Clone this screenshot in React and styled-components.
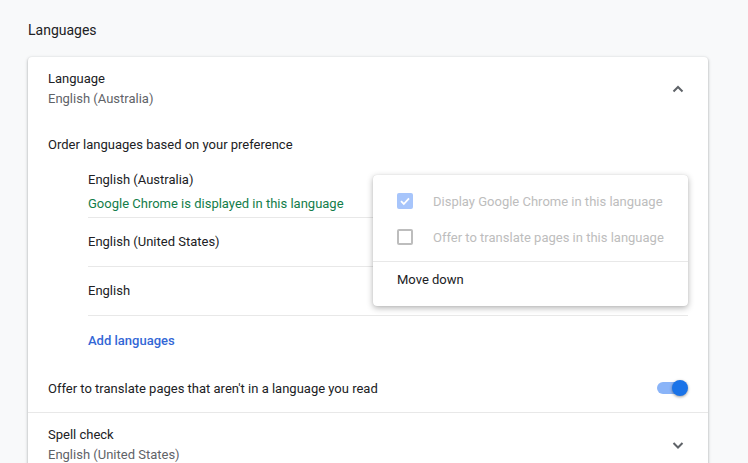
import React from "react";
import styled, { createGlobalStyle } from "styled-components";

const Global = createGlobalStyle`
  html, body {
    margin: 0;
    padding: 0;
    background: #f8f9fa;
    font-family: Roboto, "Noto Sans", Arial, sans-serif;
    font-size: 13px;
    color: #202124;
  }
`;

const Chevron = ({ up }) => (
  <svg width="20" height="20" viewBox="0 0 20 20">
    <path
      d={up ? "M5.5 12.5 L10 8 L14.5 12.5" : "M5.5 8 L10 12.5 L14.5 8"}
      fill="none"
      stroke="#5f6368"
      strokeWidth="2"
    />
  </svg>
);

const App = () => {
  return (
    <Page>
      <Global />
      <Heading>Languages</Heading>
      <Card>
        <TwoLineRow>
          <TextBlock>
            <Primary>Language</Primary>
            <Secondary>English (Australia)</Secondary>
          </TextBlock>
          <Chevron up />
        </TwoLineRow>

        <Intro>Order languages based on your preference</Intro>

        <List>
          <LangItem first>
            <Primary>English (Australia)</Primary>
            <Green>Google Chrome is displayed in this language</Green>
          </LangItem>
          <LangItem>English (United States)</LangItem>
          <LangItem>English</LangItem>
          <AddRow>Add languages</AddRow>
        </List>

        <ToggleRow>
          <span>Offer to translate pages that aren't in a language you read</span>
          <Toggle>
            <Track />
            <Knob />
          </Toggle>
        </ToggleRow>

        <TwoLineRow>
          <TextBlock>
            <Primary>Spell check</Primary>
            <Secondary>English (United States)</Secondary>
          </TextBlock>
          <Chevron />
        </TwoLineRow>

        <Menu>
          <MenuCheck>
            <Box checked>
              <svg width="12" height="12" viewBox="0 0 12 12">
                <path d="M2 6.2 L4.8 9 L10 3.4" fill="none" stroke="#fff" strokeWidth="1.8" />
              </svg>
            </Box>
            Display Google Chrome in this language
          </MenuCheck>
          <MenuCheck>
            <Box />
            Offer to translate pages in this language
          </MenuCheck>
          <MenuDivider />
          <MenuItem>Move down</MenuItem>
        </Menu>
      </Card>
    </Page>
  );
};

const Page = styled.div`
  padding: 20px 0 0 28px;
  height: 443px;
  overflow: hidden;
`;

const Heading = styled.div`
  font-size: 14px;
  line-height: 20px;
  color: #202124;
  margin-bottom: 17px;
`;

const Card = styled.div`
  position: relative;
  width: 680px;
  background: #fff;
  border-radius: 4px;
  box-shadow: 0 1px 2px rgba(60, 64, 67, 0.3), 0 1px 3px 1px rgba(60, 64, 67, 0.15);
`;

const TwoLineRow = styled.div`
  display: flex;
  align-items: center;
  justify-content: space-between;
  padding: 12px 20px;
`;

const TextBlock = styled.div`
  display: flex;
  flex-direction: column;
`;

const Primary = styled.div`
  line-height: 20px;
  color: #202124;
`;

const Secondary = styled.div`
  line-height: 20px;
  color: #5f6368;
`;

const Green = styled.div`
  line-height: 20px;
  margin-top: 4px;
  color: #137d4a;
`;

const Intro = styled.div`
  padding: 14px 20px 0;
  line-height: 20px;
`;

const List = styled.div`
  margin: 0 20px 0 60px;
`;

const LangItem = styled.div`
  display: flex;
  flex-direction: column;
  justify-content: center;
  line-height: 20px;
  border-bottom: 1px solid #e8e8e8;
  ${(p) => (p.first ? "padding: 15px 0 3px;" : "height: 48px;")}
`;

const AddRow = styled.div`
  height: 48px;
  display: flex;
  align-items: center;
  color: #3367d6;
  font-weight: 500;
`;

const ToggleRow = styled.div`
  height: 48px;
  display: flex;
  align-items: center;
  justify-content: space-between;
  padding: 0 20px;
  border-bottom: 1px solid #e8e8e8;
`;

const Toggle = styled.div`
  position: relative;
  width: 31px;
  height: 16px;
`;

const Track = styled.div`
  position: absolute;
  left: 0;
  top: 2px;
  width: 28px;
  height: 12px;
  border-radius: 6px;
  background: #8ab4f8;
`;

const Knob = styled.div`
  position: absolute;
  right: 0;
  top: 0;
  width: 16px;
  height: 16px;
  border-radius: 50%;
  background: #1a73e8;
  box-shadow: 0 1px 3px rgba(0, 0, 0, 0.4);
`;

const Menu = styled.div`
  position: absolute;
  top: 118px;
  right: 20px;
  width: 315px;
  padding: 8px 0 10px;
  background: #fff;
  border-radius: 4px;
  box-shadow: 0 2px 6px rgba(0, 0, 0, 0.3), 0 0 1px rgba(0, 0, 0, 0.15);
`;

const MenuCheck = styled.div`
  height: 36px;
  display: flex;
  align-items: center;
  gap: 20px;
  padding: 0 24px;
  color: #bdbdbd;
`;

const Box = styled.div`
  box-sizing: border-box;
  width: 16px;
  height: 16px;
  border-radius: 2px;
  display: flex;
  align-items: center;
  justify-content: center;
  ${(p) =>
    p.checked
      ? "background: #a7c5fb;"
      : "border: 2px solid #bdbdbd;"}
`;

const MenuDivider = styled.div`
  height: 1px;
  margin-top: 6px;
  background: #e8e8e8;
`;

const MenuItem = styled.div`
  height: 34px;
  display: flex;
  align-items: center;
  padding: 0 24px;
  color: #202124;
`;

export default App;
